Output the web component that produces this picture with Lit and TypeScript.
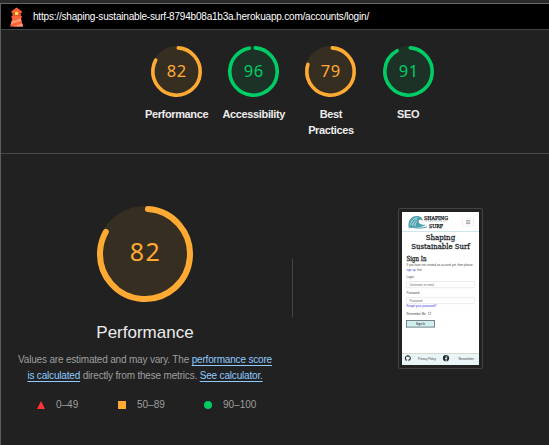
import { LitElement, html, svg, css } from "lit";
import { customElement, property } from "lit/decorators.js";

@customElement("score-gauge")
class ScoreGauge extends LitElement {
  @property({ type: Number }) score = 0;
  @property({ type: Number }) size = 51;
  @property({ type: Number }) stroke = 3.6;

  static styles = css`
    :host { display: block; }
    svg { display: block; overflow: visible; }
    .pass { color: #00cc66; }
    .average { color: #ffaa33; }
    .disc { fill: currentColor; opacity: 0.1; }
    .arc { fill: none; stroke: currentColor; stroke-linecap: round; }
    text { fill: currentColor; font-family: "Noto Sans", sans-serif; text-anchor: middle; }
    .small { font-size: 16.5px; letter-spacing: 0.6px; }
    .large { font-size: 25px; letter-spacing: 1.4px; }
  `;

  render() {
    const s = this.size;
    const c = s / 2;
    const r = c - this.stroke / 2;
    const circ = 2 * Math.PI * r;
    const large = s > 60;
    const startOffset = (this.stroke / 2 / circ) * 360;
    const length = (this.score / 100) * circ - (large ? 0 : this.stroke / 3);
    return html`<svg class=${this.score >= 90 ? "pass" : "average"} width=${s} height=${s} viewBox="0 0 ${s} ${s}">
      <circle class="disc" cx=${c} cy=${c} r=${c}></circle>
      <circle class="arc" cx=${c} cy=${c} r=${r} stroke-width=${this.stroke}
        stroke-dasharray="${length} ${circ}" transform="rotate(${startOffset - 90} ${c} ${c})"></circle>
      <text class=${large ? "large" : "small"} x=${c + (large ? 0.5 : 0.3)} y=${c + (large ? 7 : 5.5)}>${this.score}</text>
    </svg>`;
  }
}

@customElement("page-thumbnail")
class PageThumbnail extends LitElement {
  static styles = css`
    :host { display: block; }
    svg { display: block; overflow: visible; }
    .slab { font-family: "DejaVu Serif", serif; fill: #23282c; stroke: #23282c; stroke-width: 0.32px; }
    .sans { font-family: "Liberation Sans", sans-serif; fill: #444; font-size: 3.5px; }
    .link { fill: #3535d8; }
    .hint { fill: #666; }
    .strong { font-weight: bold; }
  `;

  render() {
    const label = (x: number, y: number, w: number, text: string, cls = "") =>
      svg`<text class="sans ${cls}" x=${x} y=${y} textLength=${w} lengthAdjust="spacingAndGlyphs">${text}</text>`;
    const slab = (x: number, y: number, w: number, size: number, text: string) =>
      svg`<text class="slab" x=${x} y=${y} font-size=${size} textLength=${w} lengthAdjust="spacingAndGlyphs">${text}</text>`;
    return html`<svg width="77" height="153" viewBox="0 0 77 153">
      <rect width="77" height="153" fill="#fff"></rect>
      <path d="M6.5 14.8C6 8 9.5 4.1 14.5 4C18 4 20.8 6 20.7 8.8C19.3 7.2 17.2 7.3 16.7 9C16.2 11.4 19.5 13.4 24 12.6C20 16.4 12 16 6.5 14.8Z" fill="#4c9fac"></path>
      <path d="M8.5 13C9 8.8 12 6 15.6 5.6M10.5 13.8C11 10.2 12.7 8.2 15.2 7.4M13 14.3C12.8 12.3 13.6 10.5 14.7 9.8" fill="none" stroke="#d6eef1" stroke-width=".85"></path>
      <path d="M6.5 15.8C12 14.5 16 17.8 25 14.8" fill="none" stroke="#4c9fac" stroke-width="1"></path>
      ${slab(22, 7.5, 24, 5.2, "SHAPING")}
      <path d="M24 9.4H44" stroke="#9cb3b8" stroke-width=".6" stroke-dasharray="1.2 .7"></path>
      ${slab(27, 15.5, 14, 5.2, "SURF")}
      <rect x="60.5" y="6.3" width="11" height="7.6" rx="1" fill="#fff" stroke="#e6e6e6" stroke-width=".6"></rect>
      <path d="M64 8.6H68.3M64 10.1H68.3M64 11.6H68.3" stroke="#777" stroke-width=".65"></path>
      <path d="M0 19.5H77" stroke="#bfe0e3" stroke-width=".8"></path>
      ${slab(23.7, 27.6, 29.5, 8.2, "Shaping")}
      ${slab(9.3, 36.5, 58.5, 8.2, "Sustainable Surf")}
      ${slab(4.5, 48.6, 20, 7, "Sign In")}
      ${label(4.5, 54.2, 66, "If you have not created an account yet, then please")}
      ${label(4.5, 58.7, 9, "sign up", "link")}${label(15, 58.7, 5.4, "first.")}
      ${label(4.5, 66.2, 8, "Login:")}
      <rect x="4.4" y="69.5" width="68" height="6.2" rx=".8" fill="#fff" stroke="#dedede" stroke-width=".6"></rect>
      ${label(7.5, 73.8, 24.5, "Username or email", "hint")}
      ${label(4.5, 82.2, 13.5, "Password:")}
      <rect x="4.4" y="85.4" width="68" height="6.2" rx=".8" fill="#fff" stroke="#dedede" stroke-width=".6"></rect>
      ${label(7.5, 89.7, 13, "Password", "hint")}
      ${label(4.5, 95.2, 30, "Forgot your password?", "link")}
      ${label(4.5, 102.7, 20, "Remember Me:")}
      <rect x="26.3" y="100.1" width="2.6" height="2.6" fill="#fff" stroke="#777" stroke-width=".4"></rect>
      <rect x="4.5" y="108.5" width="28" height="6.6" fill="#d3eef0" stroke="#59676c" stroke-width=".8"></rect>
      ${label(14, 113.1, 9, "Sign In", "strong")}
      <rect y="141.5" width="77" height="11.5" fill="#e9f5f6"></rect>
      <path d="M0 141.5H77" stroke="#c6c2ba" stroke-width=".6"></path>
      <path transform="translate(2.8 143.2) scale(.38)" fill="#24292e" d="M8 0C3.58 0 0 3.58 0 8c0 3.54 2.29 6.53 5.47 7.59.4.07.55-.17.55-.38 0-.19-.01-.82-.01-1.49-2.01.37-2.53-.49-2.69-.94-.09-.23-.48-.94-.82-1.13-.28-.15-.68-.52-.01-.53.63-.01 1.08.58 1.23.82.72 1.21 1.87.87 2.33.66.07-.52.28-.87.51-1.07-1.78-.2-3.64-.89-3.64-3.95 0-.87.31-1.59.82-2.15-.08-.2-.36-1.02.08-2.12 0 0 .67-.21 2.2.82a7.6 7.6 0 0 1 4 0c1.53-1.04 2.2-.82 2.2-.82.44 1.1.16 1.92.08 2.12.51.56.82 1.27.82 2.15 0 3.07-1.87 3.75-3.65 3.95.29.25.54.73.54 1.48 0 1.07-.01 1.93-.01 2.2 0 .21.15.46.55.38A8 8 0 0 0 16 8c0-4.42-3.58-8-8-8Z"></path>
      ${label(16, 147.7, 18, "Privacy Policy")}
      <circle cx="44" cy="146.2" r="3.1" fill="#20272a"></circle>
      <path d="M45.4 144.2H44.9Q44.1 144.2 44.1 145.1V149.3M42.9 146.4H45.3" fill="none" stroke="#e9f5f6" stroke-width=".85"></path>
      ${label(56.5, 147.7, 15.5, "Newsletter")}
    </svg>`;
  }
}

@customElement("app-root")
class AppRoot extends LitElement {
  static styles = css`
    :host {
      display: flex; flex-direction: column; box-sizing: border-box;
      width: 549px; height: 445px; overflow: hidden;
      background: #212121; color: #ececec;
      font-family: "Liberation Sans", Arial, sans-serif; font-size: 10px;
    }
    .strip { height: 3px; background: #292929; flex: none; }
    .report { flex: 1; border-left: 1px solid #5c5c5c; border-top: 1px solid #666; }
    .topbar {
      display: flex; align-items: center; height: 25px; gap: 9px; padding-left: 8px;
      background: #000; border-bottom: 1px solid #444; color: #fff;
    }
    .topbar svg { display: block; width: 15px; height: 20px; }
    .url { white-space: nowrap; letter-spacing: -0.19px; }
    .scores { border-bottom: 1px solid #484848; height: 123px; display: flex; padding-left: 137px; }
    .score { display: flex; flex-direction: column; align-items: center; width: 77.2px; padding-top: 16px; }
    .label {
      margin-top: 9px; width: 66px; text-align: center; font-weight: bold;
      font-size: 11px; line-height: 16px; letter-spacing: -0.36px;
    }
    .category { display: flex; }
    .summary {
      width: 288px; margin-right: 3px; box-sizing: border-box; padding-top: 52px;
      display: flex; flex-direction: column; align-items: center;
    }
    .title { margin-top: 21px; font-size: 17px; line-height: 20px; }
    .description { margin-top: 9px; color: #9e9e9e; line-height: 16px; text-align: center; white-space: nowrap; letter-spacing: -0.18px; }
    .link { color: #8fcbff; text-decoration: underline; text-underline-offset: 2px; }
    .legend { display: flex; align-self: stretch; padding-left: 36px; margin-top: 13px; line-height: 16px; color: #9e9e9e; }
    .range { display: flex; align-items: center; gap: 11px; }
    .range svg { display: block; }
    .first { width: 81px; }
    .second { width: 86px; }
    .divider { width: 1px; height: 58px; margin-top: 105px; background: #444; }
    .frame { margin: 54px 0 0 105px; width: 77px; height: 153px; padding: 3px; border: 1px solid #424242; border-radius: 2px; }
  `;

  private scores: [number, string][] = [
    [82, "Performance"], [96, "Accessibility"], [79, "Best Practices"], [91, "SEO"],
  ];

  render() {
    return html`
      <div class="strip"></div>
      <div class="report">
        <div class="topbar">
          <svg viewBox="0 0 15 20">
            <path d="M2.5 6V4.2L7.6 .5L12.7 4.2V6H11.6V9H12.7V11.2H11.8L14 19.5H1L3.4 11.2H2.5V9H3.6V6Z" fill="#ff6238"></path>
            <path d="M3.6 5.5H11.6V9H3.6Z" fill="#e8512d"></path>
            <rect x="6" y="5" width="3.2" height="3" fill="#ffe04a"></rect>
            <path d="M2.7 14.4L11.9 11.6L12.5 13.8L2 17ZM3.5 19.5L13.3 16.5L14 19.5Z" fill="#ff9b7a"></path>
          </svg>
          <span class="url">https://shaping-sustainable-surf-8794b08a1b3a.herokuapp.com/accounts/login/</span>
        </div>
        <div class="scores">
          ${this.scores.map(([n, name]) => html`<div class="score">
            <score-gauge .score=${n}></score-gauge><div class="label">${name}</div>
          </div>`)}
        </div>
        <div class="category">
          <div class="summary">
            <score-gauge .score=${82} .size=${96} .stroke=${6}></score-gauge>
            <div class="title">Performance</div>
            <div class="description">Values are estimated and may vary. The <span class="link">performance score</span><br><span class="link">is calculated</span> directly from these metrics. <span class="link">See calculator.</span></div>
            <div class="legend">
              <div class="range first"><svg width="8" height="8"><path d="M4 0L8 8H0Z" fill="#ff3333"></path></svg>0–49</div>
              <div class="range second"><svg width="8" height="8"><rect width="8" height="8" fill="#ffaa33"></rect></svg>50–89</div>
              <div class="range"><svg width="8" height="8"><circle cx="4" cy="4" r="4" fill="#00cc66"></circle></svg>90–100</div>
            </div>
          </div>
          <div class="divider"></div>
          <div class="frame"><page-thumbnail></page-thumbnail></div>
        </div>
      </div>`;
  }
}
